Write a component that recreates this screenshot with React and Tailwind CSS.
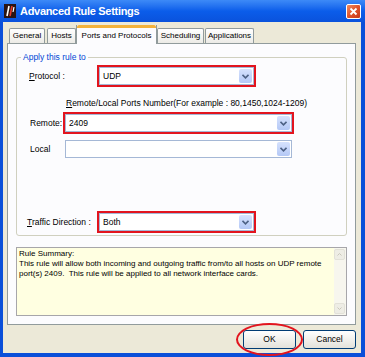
import React from "react";

function Chevron() {
  return (
    <svg width="7" height="5" viewBox="0 0 7 5">
      <path d="M0.5 0.8 L3.5 3.8 L6.5 0.8" fill="none" stroke="#4D6185" strokeWidth="1.6" />
    </svg>
  );
}

function Combo({ value, w, red }) {
  const inner = (
    <div className="h-[18px] bg-white border border-[#A5B8D6] flex items-center">
      <span className="flex-1 pl-[3px] text-[8.5px] text-black leading-none">{value}</span>
      <div className="w-[13px] h-[14px] mr-[1px] rounded-[2px] bg-gradient-to-b from-[#D6E2FD] to-[#B4C8F6] flex items-center justify-center">
        <Chevron />
      </div>
    </div>
  );
  if (red) {
    return <div className={`border-2 border-[#E2141E] ${w}`}>{inner}</div>;
  }
  return <div className={w}>{inner}</div>;
}

function Tab({ label, cls, selected }) {
  if (selected) {
    return (
      <div className={`relative z-10 -mb-px h-[19px] bg-[#FCFCFE] border-x border-[#919B9C] flex flex-col ${cls}`}>
        <div className="h-[3px] bg-[#F3B23B] rounded-t-[2px]" />
        <div className="flex-1 flex items-center justify-center text-[8px] text-black leading-none pb-[1px]">{label}</div>
      </div>
    );
  }
  return (
    <div className={`h-[15px] border border-b-0 border-[#919B9C] rounded-t-[2px] bg-gradient-to-b from-white to-[#ECEBE6] flex items-center justify-center text-[8px] text-black leading-none ${cls}`}>
      {label}
    </div>
  );
}

export default function App() {
  return (
    <div className="relative w-[365px] h-[357px] bg-[#0A4FD9] flex flex-col overflow-hidden font-['Liberation_Sans',sans-serif]">
      {/* title bar */}
      <div className="h-[22px] flex items-center pl-[4px] pr-[4px] bg-gradient-to-b from-[#3D8AF7] via-[#0B5DEA] to-[#0A52DC]">
        <svg width="12" height="14" viewBox="0 0 12 14">
          <rect x="0" y="0" width="12" height="14" fill="#2A1414" />
          <path d="M3 12 L5 2" stroke="#ffffff" strokeWidth="1.6" />
          <path d="M6 12 L8 2" stroke="#E53A2A" strokeWidth="1.6" />
          <path d="M9 8 L10 3" stroke="#ffffff" strokeWidth="1.2" />
        </svg>
        <span className="ml-[4px] text-white font-bold text-[11px] tracking-[-0.3px] leading-none">Advanced Rule Settings</span>
        <div className="flex-1" />
        <div className="w-[15px] h-[15px] rounded-[2px] border border-white bg-gradient-to-br from-[#F08A5E] via-[#E0532A] to-[#C5381A] flex items-center justify-center">
          <svg width="9" height="9" viewBox="0 0 9 9">
            <path d="M1.5 1.5 L7.5 7.5 M7.5 1.5 L1.5 7.5" stroke="#ffffff" strokeWidth="1.8" />
          </svg>
        </div>
      </div>

      {/* body */}
      <div className="flex-1 ml-[3px] mr-[4px] mb-[4px] bg-[#ECE9D8] flex flex-col">
        {/* tabs */}
        <div className="h-[21px] flex items-end pl-[6px]">
          <Tab label="General" cls="w-[36px]" />
          <Tab label="Hosts" cls="ml-[2px] w-[29px]" />
          <Tab label="Ports and Protocols" cls="w-[81px]" selected />
          <Tab label="Scheduling" cls="w-[47px]" />
          <Tab label="Applications" cls="ml-[1px] w-[49px]" />
        </div>

        {/* panel */}
        <div className="ml-[4px] mr-[5px] h-[282px] border border-[#919B9C] bg-[#FCFCFE] flex flex-col pl-[8px] pr-[8px]">
          {/* group box */}
          <div className="relative mt-[13px] h-[179px] border border-[#D0D0BF] rounded-[3px] flex flex-col">
            <span className="absolute -top-[6px] left-[4px] px-[2px] bg-[#FCFCFE] text-[8.5px] leading-[10px] text-[#0046D5]">
              Apply this rule to
            </span>

            <div className="mt-[7px] flex items-center pl-[12px]">
              <span className="w-[68px] text-[8.5px] text-black leading-none"><span className="underline">P</span>rotocol :</span>
              <Combo value="UDP" w="w-[159px]" red />
            </div>

            <div className="mt-[11px] h-[11px] pl-[49px] text-[8.5px] leading-[11px] text-black">
              <span className="underline">R</span>emote/Local Ports Number(For example : 80,1450,1024-1209)
            </div>

            <div className="mt-[3px] flex items-center pl-[13px]">
              <span className="w-[33px] text-[8.5px] text-black leading-none">Remote:</span>
              <Combo value="2409" w="w-[231px]" red />
            </div>

            <div className="mt-[6px] flex items-center pl-[13px]">
              <span className="w-[35px] text-[8.5px] text-black leading-none">Local</span>
              <Combo value="" w="w-[227px]" />
            </div>

            <div className="mt-[53px] flex items-center pl-[10px]">
              <span className="w-[70px] text-[8.5px] text-black leading-none"><span className="underline">T</span>raffic Direction :</span>
              <Combo value="Both" w="w-[159px]" red />
            </div>
          </div>

          {/* summary */}
          <div className="mt-[11px] h-[69px] border border-[#A7A6AA] bg-[#FFFFE1] flex">
            <div className="flex-1 pl-[2px] pt-[1px] text-[8px] leading-[10px] text-black">
              Rule Summary:
              <br />
              This rule will allow both incoming and outgoing traffic from/to all hosts on UDP remote port(s) 2409.&nbsp; This rule will be applied to all network interface cards.
            </div>
            <div className="w-[12px] bg-[#F7F6EE] flex flex-col justify-between py-[1px] pr-[1px]">
              <div className="h-[11px] rounded-[2px] bg-[#EEEDE5] border border-[#E2E1D8] flex items-center justify-center">
                <svg width="5" height="3" viewBox="0 0 5 3"><path d="M0.5 2.5 L2.5 0.5 L4.5 2.5" fill="none" stroke="#C9C7BA" strokeWidth="1" /></svg>
              </div>
              <div className="h-[11px] rounded-[2px] bg-[#EEEDE5] border border-[#E2E1D8] flex items-center justify-center">
                <svg width="5" height="3" viewBox="0 0 5 3"><path d="M0.5 0.5 L2.5 2.5 L4.5 0.5" fill="none" stroke="#C9C7BA" strokeWidth="1" /></svg>
              </div>
            </div>
          </div>
        </div>

        {/* buttons */}
        <div className="mt-[5px] flex justify-end gap-[7px] mr-[5px]">
          <div className="relative w-[53px] h-[19px] rounded-[3px] border border-[#003C74] bg-gradient-to-b from-white to-[#E3E2DA] flex items-center justify-center text-[8.5px] text-black leading-none">
            OK
            <div className="absolute -left-[8px] -top-[8px] w-[67px] h-[33px] rounded-[50%] border-2 border-[#E2141E]" />
          </div>
          <div className="w-[53px] h-[19px] rounded-[3px] border border-[#003C74] bg-gradient-to-b from-white to-[#E3E2DA] flex items-center justify-center text-[8.5px] text-black leading-none">
            Cancel
          </div>
        </div>
      </div>
    </div>
  );
}
